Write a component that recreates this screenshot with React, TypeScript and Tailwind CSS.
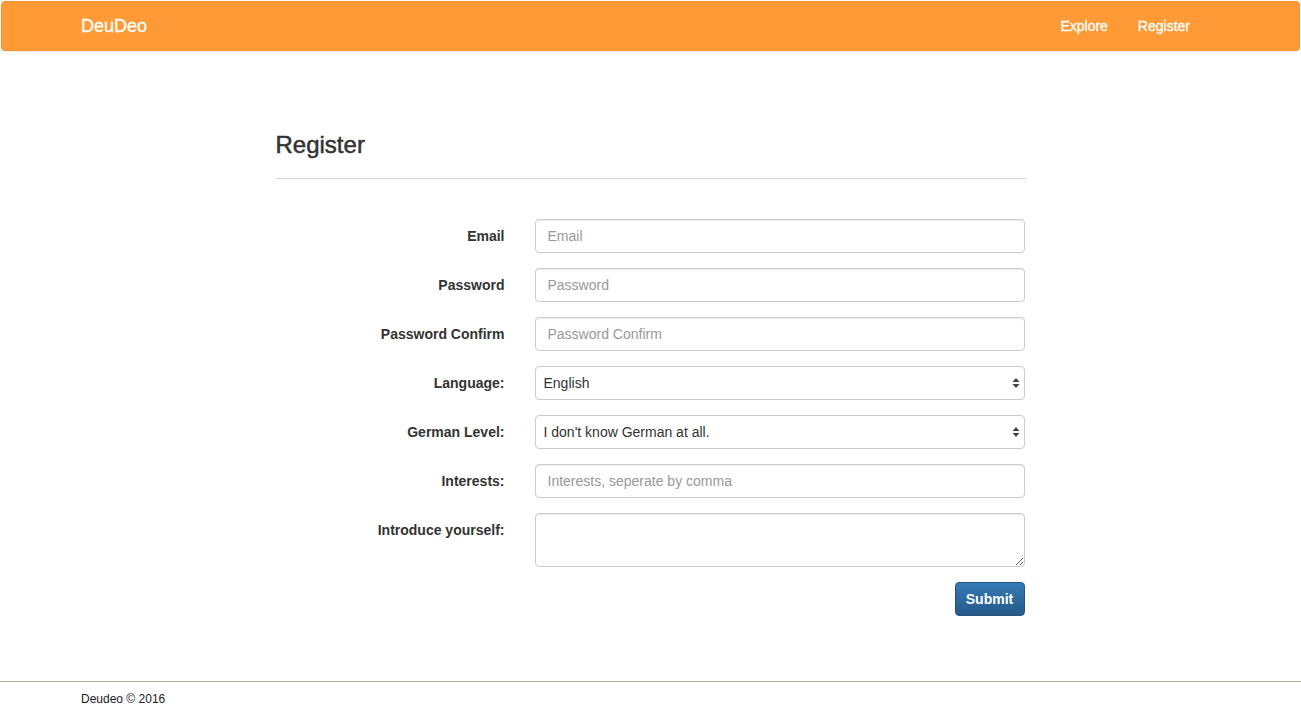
import React from 'react';

const font = { fontFamily: '"Liberation Sans", Arial, sans-serif' };

function SelectArrows() {
  return (
    <svg
      className="pointer-events-none absolute right-[5px] top-1/2 -translate-y-1/2"
      width="8"
      height="12"
      viewBox="0 0 8 12"
      aria-hidden="true"
    >
      <path d="M4 1 L7.5 5 L0.5 5 Z" fill="#444" />
      <path d="M4 11 L7.5 7 L0.5 7 Z" fill="#444" />
    </svg>
  );
}

function Label({ children, top }: { children: React.ReactNode; top?: boolean }) {
  return (
    <label
      className={`text-right text-[14px] font-bold leading-[20px] text-[#333] ${
        top ? 'pt-[7px]' : 'self-center'
      }`}
    >
      {children}
    </label>
  );
}

const inputCls =
  'h-[34px] w-full rounded-[4px] border border-[#ccc] bg-white px-[12px] text-[14px] text-[#555] shadow-[inset_0_1px_1px_rgba(0,0,0,0.075)] outline-none placeholder:text-[#999]';

const selectCls =
  'h-[34px] w-full appearance-none rounded-[4px] border border-[#ccc] bg-white pl-[8px] text-[14px] text-[#333] outline-none';

export default function App() {
  return (
    <div className="min-h-screen bg-white text-[#333]" style={font}>
      {/* Navbar */}
      <div className="pt-px px-px">
        <nav className="flex h-[50px] items-center justify-between rounded-[4px] border border-[#f7922c] bg-[#ff9a36] shadow-[0_1px_2px_rgba(0,0,0,0.08)]">
          <span className="pl-[79px] text-[18px] leading-[20px] text-white [-webkit-text-stroke:0.3px_#fff]">
            DeuDeo
          </span>
          <div className="flex items-center gap-[30px] pr-[109px] text-[14px] text-white [-webkit-text-stroke:0.3px_#fff]">
            <span>Explore</span>
            <span>Register</span>
          </div>
        </nav>
      </div>

      {/* Main */}
      <main className="mx-auto w-[750px] pt-[81px]">
        <div className="border-b border-[#d5d5d5] pb-[20px]">
          <h1 className="text-[24px] font-medium leading-[26px] text-[#333] [-webkit-text-stroke:0.5px_#333]">
            Register
          </h1>
        </div>

        <form className="mt-[40px] grid grid-cols-[229px_490px] gap-x-[30px] gap-y-[15px]">
          <Label>Email</Label>
          <input className={inputCls} placeholder="Email" style={font} />

          <Label>Password</Label>
          <input className={inputCls} type="password" placeholder="Password" style={font} />

          <Label>Password Confirm</Label>
          <input className={inputCls} type="password" placeholder="Password Confirm" style={font} />

          <Label>Language:</Label>
          <div className="relative">
            <select className={selectCls} style={font} defaultValue="en">
              <option value="en">English</option>
            </select>
            <SelectArrows />
          </div>

          <Label>German Level:</Label>
          <div className="relative">
            <select className={selectCls} style={font} defaultValue="0">
              <option value="0">I don't know German at all.</option>
            </select>
            <SelectArrows />
          </div>

          <Label>Interests:</Label>
          <input className={inputCls} placeholder="Interests, seperate by comma" style={font} />

          <Label top>Introduce yourself:</Label>
          <textarea
            className="block h-[54px] w-full rounded-[4px] border border-[#ccc] bg-white px-[12px] py-[6px] text-[14px] text-[#555] shadow-[inset_0_1px_1px_rgba(0,0,0,0.075)] outline-none"
            style={font}
          />

          <div />
          <div className="flex justify-end">
            <button
              type="button"
              className="h-[34px] w-[70px] rounded-[4px] border border-[#245580] bg-gradient-to-b from-[#337ab7] to-[#265a88] text-[14px] font-bold text-white"
              style={font}
            >
              Submit
            </button>
          </div>
        </form>
      </main>

      {/* Footer */}
      <footer className="mt-[65px] border-t border-[#b9a894]">
        <p className="pl-[81px] pt-[9px] text-[12px] leading-[17px] text-[#222]">Deudeo © 2016</p>
      </footer>
    </div>
  );
}
